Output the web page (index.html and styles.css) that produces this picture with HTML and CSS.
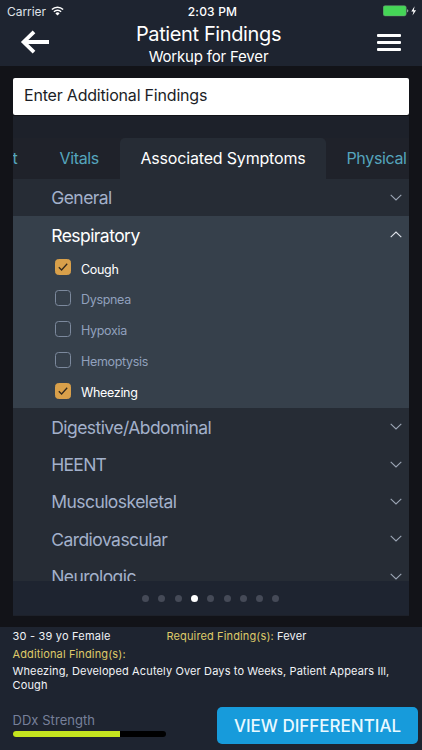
FILE: index.html
```html
<!DOCTYPE html>
<html lang="en">
<head>
<meta charset="utf-8">
<title>Patient Findings</title>
<link rel="stylesheet" href="styles.css">
</head>
<body>
<svg class="defs" width="0" height="0">
  <symbol id="chevron" viewBox="0 0 12 7"><path d="M.7.8 6 6 11.3.8"/></symbol>
  <symbol id="tick" viewBox="0 0 10 8"><path d="M.8 4.2 3.6 7 9.2.8"/></symbol>
</svg>
<header class="top">
  <div class="status">
    <div class="carrier"><span class="carrier-name">Carrier</span>
      <svg class="wifi" width="13" height="10" viewBox="0 0 13 10"><path d="M.9 3.5a8 8 0 0 1 11.2 0M2.9 5.7a5.1 5.1 0 0 1 7.2 0"/><path class="solid" d="M6.5 9.6 4.4 7.4a3 3 0 0 1 4.2 0z"/></svg>
    </div>
    <span class="clock">2:03 PM</span>
    <div class="power">
      <svg width="34" height="12" viewBox="0 0 34 12"><rect class="cell" x=".2" y=".7" width="23" height="10.2" rx="1.8"/><path class="nub" d="M24 4.2q1.4.4 1.4 1.6T24 7.4z"/><path class="bolt" d="M31.6 1.2 28.3 6.4h2.2l-1 4 3.6-5.2h-2.3z"/></svg>
    </div>
  </div>
  <nav class="navbar">
    <svg class="back" width="30" height="26" viewBox="0 0 30 26"><path d="M29 13H3M14 2.8 3.6 13 14 23.2"/></svg>
    <div class="titles">
      <h1 class="title">Patient Findings</h1>
      <p class="subtitle">Workup for Fever</p>
    </div>
    <div class="menu"><i></i><i></i><i></i></div>
  </nav>
</header>
<main class="main">
  <div class="search"><span class="search-text">Enter Additional Findings</span></div>
  <section class="panel">
    <div class="tabs">
      <span class="tab tab-cut">t</span>
      <span class="tab tab-vitals">Vitals</span>
      <span class="tab tab-active">Associated Symptoms</span>
      <span class="tab tab-physical">Physical</span>
    </div>
    <div class="list">
      <div class="row"><span class="general">General</span><svg class="chev"><use href="#chevron"/></svg></div>
      <div class="group">
        <div class="row open"><span class="respiratory">Respiratory</span><svg class="chev up"><use href="#chevron"/></svg></div>
        <div class="check on"><span class="box"><svg><use href="#tick"/></svg></span><span class="lbl cough">Cough</span></div>
        <div class="check"><span class="box"></span><span class="lbl dyspnea">Dyspnea</span></div>
        <div class="check"><span class="box"></span><span class="lbl hypoxia">Hypoxia</span></div>
        <div class="check"><span class="box"></span><span class="lbl hemoptysis">Hemoptysis</span></div>
        <div class="check on"><span class="box"><svg><use href="#tick"/></svg></span><span class="lbl wheezing">Wheezing</span></div>
      </div>
      <div class="row"><span class="digestive">Digestive/Abdominal</span><svg class="chev"><use href="#chevron"/></svg></div>
      <div class="row"><span class="heent">HEENT</span><svg class="chev"><use href="#chevron"/></svg></div>
      <div class="row"><span class="musculo">Musculoskeletal</span><svg class="chev"><use href="#chevron"/></svg></div>
      <div class="row"><span class="cardio">Cardiovascular</span><svg class="chev"><use href="#chevron"/></svg></div>
      <div class="row"><span class="neuro">Neurologic</span><svg class="chev"><use href="#chevron"/></svg></div>
    </div>
    <div class="dots"><i></i><i></i><i></i><i class="current"></i><i></i><i></i><i></i><i></i><i></i></div>
  </section>
</main>
<footer class="footer">
  <div class="facts"><span class="age">30 - 39 yo Female</span><span class="required"><b>Required Finding(s):</b> Fever</span></div>
  <p class="extra-title">Additional Finding(s):</p>
  <p class="extra">Wheezing, Developed Acutely Over Days to Weeks, Patient Appears Ill,<br>Cough</p>
  <div class="actions">
    <div class="strength"><span class="strength-label">DDx Strength</span><div class="meter"><div class="fill"></div></div></div>
    <button class="view"><span>VIEW DIFFERENTIAL</span></button>
  </div>
</footer>
</body>
</html>
```
FILE: styles.css
```css
* { box-sizing: border-box; margin: 0; padding: 0; }
body {
  width: 422px; height: 750px; overflow: hidden;
  display: flex; flex-direction: column;
  background: #121318; color: #fff;
  font-family: Inter, "Liberation Sans", sans-serif;
  white-space: nowrap;
}
svg { display: block; flex: none; fill: none; }
.defs { position: absolute; }
.top { height: 66px; background: #1e2430; }
.status { height: 22px; display: grid; grid-template-columns: 1fr auto 1fr; align-items: center; padding: 0 5px 0 7px; }
.carrier { display: flex; align-items: center; gap: 5px; font-size: 12px; color: #dfe2e8; }
.carrier-name { letter-spacing: -0.05px; }
.wifi { margin-top: -1px; }
.wifi path { stroke: #fff; stroke-width: 1.5; }
.wifi .solid { fill: #fff; stroke: none; }
.clock { font-size: 12px; font-weight: 500; letter-spacing: 0.2px; padding-left: 1px; }
.power { justify-self: end; }
.cell { fill: #45d657; stroke: #71987b; stroke-width: .5; }
.nub { fill: #8ea197; }
.bolt { fill: #fff; }
.navbar { height: 44px; display: grid; grid-template-columns: 30px 1fr 24px; align-items: start; padding: 0 21px 0 20px; }
.back { margin-top: 7px; stroke: #fff; stroke-width: 3.8; }
.titles { text-align: center; padding-right: 10px; }
.title { font-size: 20px; line-height: 24px; font-weight: 400; letter-spacing: -0.38px; }
.subtitle { font-size: 15px; line-height: 20px; letter-spacing: -0.18px; margin-top: 1px; }
.menu { display: grid; gap: 4px; margin-top: 12px; }
.menu i { height: 3px; background: #fff; border-radius: 1px; }
.main { height: 561px; padding: 12px 13px 12px 12.5px; }
.search { height: 36.5px; background: #fff; border-radius: 2px; padding: 0 0 2px 11.5px; display: flex; align-items: center; color: #1b1e26; font-size: 16px; letter-spacing: -0.2px; }
.panel { margin-top: 1px; height: 500px; background: #1d212a; padding-top: 22.5px; }
.tabs { height: 41px; display: flex; overflow: hidden; font-size: 16px; line-height: 41px; letter-spacing: -0.35px; color: #55a5bd; background: #1f222a; }
.tab-cut { width: 47px; }
.tab-vitals { width: 60.5px; }
.tab-active { width: 206px; text-align: center; letter-spacing: -0.18px; color: #fff; background: #262c35; border-radius: 5px 5px 0 0; }
.tab-physical { padding-left: 20.5px; }
.list { height: 402px; overflow: hidden; background: #262c35; }
.row { height: 37.3px; padding: 0 7.5px 0 38.7px; display: flex; align-items: center; justify-content: space-between; font-size: 17.5px; letter-spacing: -0.55px; color: #a3b1cb; }
.row span { padding-top: .6px; }
.row .heent { letter-spacing: -0.7px; }
.chev { width: 12px; height: 7px; stroke: #9ba5b4; stroke-width: 1.1; }
.up { transform: rotate(180deg); stroke: #e0e5ec; }
.group { height: 192px; background: #36404b; }
.row.open { color: #fff; }
.check { height: 30.9px; display: flex; align-items: center; gap: 10.5px; padding-left: 42px; font-size: 12.5px; letter-spacing: -0.32px; color: #91a0bd; }
.box { width: 16px; height: 16px; border: 1px solid #7c899d; border-radius: 3.5px; display: grid; place-items: center; margin-top: -4px; }
.box svg { width: 10px; height: 8px; stroke: #33291d; stroke-width: 1.3; }
.check.on { color: #fff; }
.on .box { background: #d9a04a; border-color: #d9a04a; }
.dots { height: 34px; display: flex; justify-content: center; align-items: center; gap: 9.3px; padding-top: 1px; background: #1e2430; }
.dots i { width: 7px; height: 7px; border-radius: 50%; background: #454a57; }
.dots .current { background: #fff; }
.footer { height: 123px; background: #1e2430; padding: 2px 4px 0 12.5px; font-size: 11px; letter-spacing: 0.13px; color: #f1f3f6; }
.facts { display: flex; line-height: 15px; }
.age { width: 154px; letter-spacing: 0.2px; }
.required b { font-weight: 400; color: #dfca69; }
.extra-title { color: #dfca69; line-height: 15px; margin-top: 3px; }
.extra { line-height: 13.5px; margin-top: 3px; }
.actions { display: flex; justify-content: space-between; margin-top: 14.5px; }
.strength { width: 153px; padding-top: 4px; font-size: 13px; letter-spacing: 0.05px; color: #77809a; }
.strength-label { display: block; line-height: 18px; }
.meter { height: 6.5px; margin-top: 2px; background: #000; border-radius: 4px; overflow: hidden; }
.fill { width: 70%; height: 100%; background: #c4e51f; }
.view { width: 201px; height: 37px; border: 0; border-radius: 5px; background: #179bdb; color: #e9f9ff; font: 500 17px Inter, sans-serif; padding-top: 1px; }
```
